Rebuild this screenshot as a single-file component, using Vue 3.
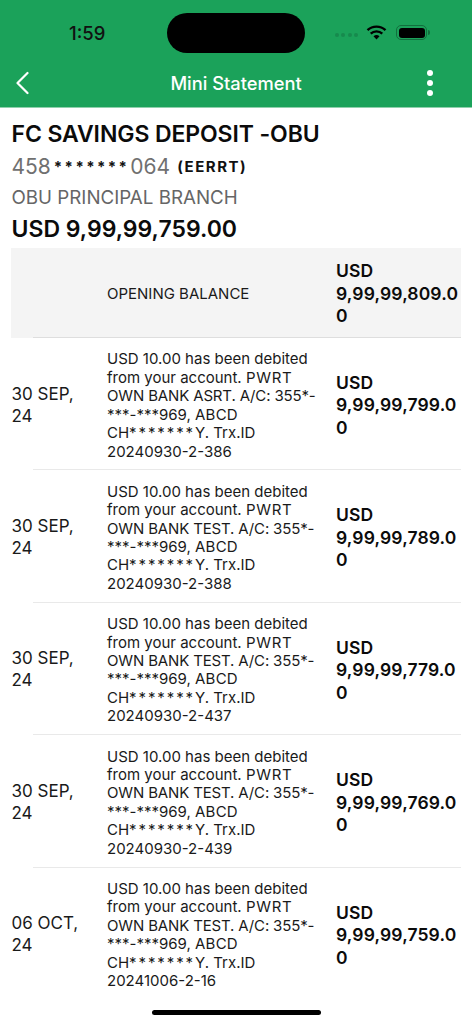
<script setup>
const rows = [
  { date: '30 SEP, 24', bank: 'ASRT', id: '20240930-2-386', bal: '9,99,99,799.00' },
  { date: '30 SEP, 24', bank: 'TEST', id: '20240930-2-388', bal: '9,99,99,789.00' },
  { date: '30 SEP, 24', bank: 'TEST', id: '20240930-2-437', bal: '9,99,99,779.00' },
  { date: '30 SEP, 24', bank: 'TEST', id: '20240930-2-439', bal: '9,99,99,769.00' },
  { date: '06 OCT, 24', bank: 'TEST', id: '20241006-2-16', bal: '9,99,99,759.00' },
]
</script>

<template>
  <div class="screen">
    <header class="top">
      <div class="status">
        <span class="time">1:59</span>
        <div class="island"></div>
        <div class="status-icons">
          <div class="signal"><i></i><i></i><i></i><i></i></div>
          <svg class="wifi" width="21" height="15" viewBox="0 0 20 15">
            <path d="M1 5.2a13 13 0 0 1 18 0" fill="none" stroke="#000" stroke-width="2.4"/>
            <path d="M4.2 8.6a8.6 8.6 0 0 1 11.6 0" fill="none" stroke="#000" stroke-width="2.4"/>
            <path d="M7 11.3a4.4 4.4 0 0 1 6 0L10 14.6z" fill="#000"/>
          </svg>
          <div class="battery"><div class="battery-fill"></div></div>
          <div class="battery-tip"></div>
        </div>
      </div>
      <nav class="nav">
        <svg class="back" width="14" height="24" viewBox="0 0 14 24">
          <path d="M12.5 2 2.5 12l10 10" fill="none" stroke="#fff" stroke-width="2.2" stroke-linecap="round" stroke-linejoin="round"/>
        </svg>
        <span class="title">Mini Statement</span>
        <div class="dots"><i></i><i></i><i></i></div>
      </nav>
    </header>

    <section class="account">
      <h1>FC SAVINGS DEPOSIT -OBU</h1>
      <div class="number"><span>458</span><b class="stars">*******</b><span>064</span><b class="tag">(EERRT)</b></div>
      <div class="branch">OBU PRINCIPAL BRANCH</div>
      <div class="total">USD 9,99,99,759.00</div>
    </section>

    <section class="table">
      <div class="row opening">
        <div class="date"></div>
        <div class="desc">OPENING BALANCE</div>
        <div class="bal">USD<br />9,99,99,809.0<br />0</div>
      </div>
      <div v-for="r in rows" :key="r.id" class="row">
        <div class="date">{{ r.date }}</div>
        <div class="desc">
          USD 10.00 has been debited<br />
          from your account. <span class="pwrt">PWRT</span><br />
          <span class="tight">OWN BANK {{ r.bank }}. A/C: 355*-</span><br />
          ***-***969, <span class="wide">ABCD</span><br />
          CH<span class="mask">*******</span>Y. Trx.ID<br />
          {{ r.id }}
        </div>
        <div class="bal">USD<br />{{ r.bal.slice(0, 13) }}<br />{{ r.bal.slice(13) }}</div>
      </div>
    </section>

    <div class="home"></div>
  </div>
</template>

<style>
html, body { margin: 0; background: #fff; }
</style>

<style scoped>
.screen {
  position: relative;
  width: 472px;
  height: 1024px;
  overflow: hidden;
  background: #fff;
  font-family: Inter, "Liberation Sans", sans-serif;
  color: #111;
}
.top { height: 108px; box-sizing: border-box; background: #1ba25a; border-bottom: 1px solid #8fd0ac; }
.status { height: 59px; display: flex; align-items: center; padding: 6px 0 0 69px; box-sizing: border-box; }
.time { font-size: 18.5px; font-weight: 500; color: #111; width: 98px; }
.island { width: 138px; height: 40px; border-radius: 20px; background: #000; }
.status-icons { display: flex; align-items: center; margin-left: 30px; }
.signal { display: flex; gap: 2.4px; margin-right: 8px; margin-top: 5px; }
.signal i { width: 4px; height: 4px; border-radius: 50%; background: #178a4d; }
.wifi { margin-right: 9px; margin-top: -1px; }
.battery { width: 31px; height: 15px; border: 1.5px solid #126f3e; border-radius: 5px; box-sizing: border-box; padding: 1.5px; }
.battery-fill { height: 100%; background: #000; border-radius: 3px; }
.battery-tip { width: 2px; height: 5px; background: #126f3e; border-radius: 0 2px 2px 0; margin-left: 1px; }
.nav { height: 48px; display: flex; align-items: center; justify-content: space-between; padding: 0 39px 0 15px; position: relative; }
.title { position: absolute; left: 0; right: 0; text-align: center; font-size: 18.3px; font-weight: 500; color: #fff; }
.dots { display: flex; flex-direction: column; gap: 4px; }
.dots i { width: 6px; height: 6px; border-radius: 50%; background: #fff; }
.account { padding: 12px 12px 0 11.5px; }
h1 { margin: 0; font-size: 23px; line-height: 28px; font-weight: 600; color: #0b0b0b; letter-spacing: -0.1px; }
.number { display: flex; align-items: center; height: 36px; box-sizing: border-box; font-size: 21px; color: #707070; }
.stars { font-size: 15px; color: #111; font-weight: 700; letter-spacing: 2.4px; padding: 0 1px 0 3px; }
.tag { font-size: 15px; font-weight: 700; color: #111; letter-spacing: 1.5px; margin-left: 7px; }
.branch { font-size: 18.75px; line-height: 28px; color: #666; }
.total { font-size: 23px; line-height: 34px; font-weight: 600; color: #0b0b0b; }
.table { margin: 2px 11px 0; }
.row { display: grid; grid-template-columns: 96px 229px 125px; height: 132.4px; align-items: center; position: relative; box-sizing: border-box; padding-top: 1px; }
.row::after { content: ""; position: absolute; left: 22px; right: 0; bottom: 0; height: 1px; background: #e9e9e9; }
.row:last-child::after { display: none; }
.opening { height: 90px; background: #f4f4f4; padding-top: 0; }
.opening::after { background: #dedede; }
.date { font-size: 17px; line-height: 22px; color: #1a1a1a; padding-right: 10px; padding-left: .5px; }
.desc { font-size: 15px; line-height: 18.4px; color: #1a1a1a; white-space: nowrap; margin-top: 2px; }
.wide { letter-spacing: .2px; }
.pwrt { letter-spacing: .7px; }
.tight { letter-spacing: -.15px; }
.mask { letter-spacing: 1.9px; }
.bal { font-size: 17.5px; line-height: 22.5px; font-weight: 600; letter-spacing: .12px; color: #0b0b0b; white-space: nowrap; margin-top: 2px; }
.home { position: absolute; left: 152px; bottom: 9px; width: 169px; height: 5px; border-radius: 3px; background: #000; }
</style>
